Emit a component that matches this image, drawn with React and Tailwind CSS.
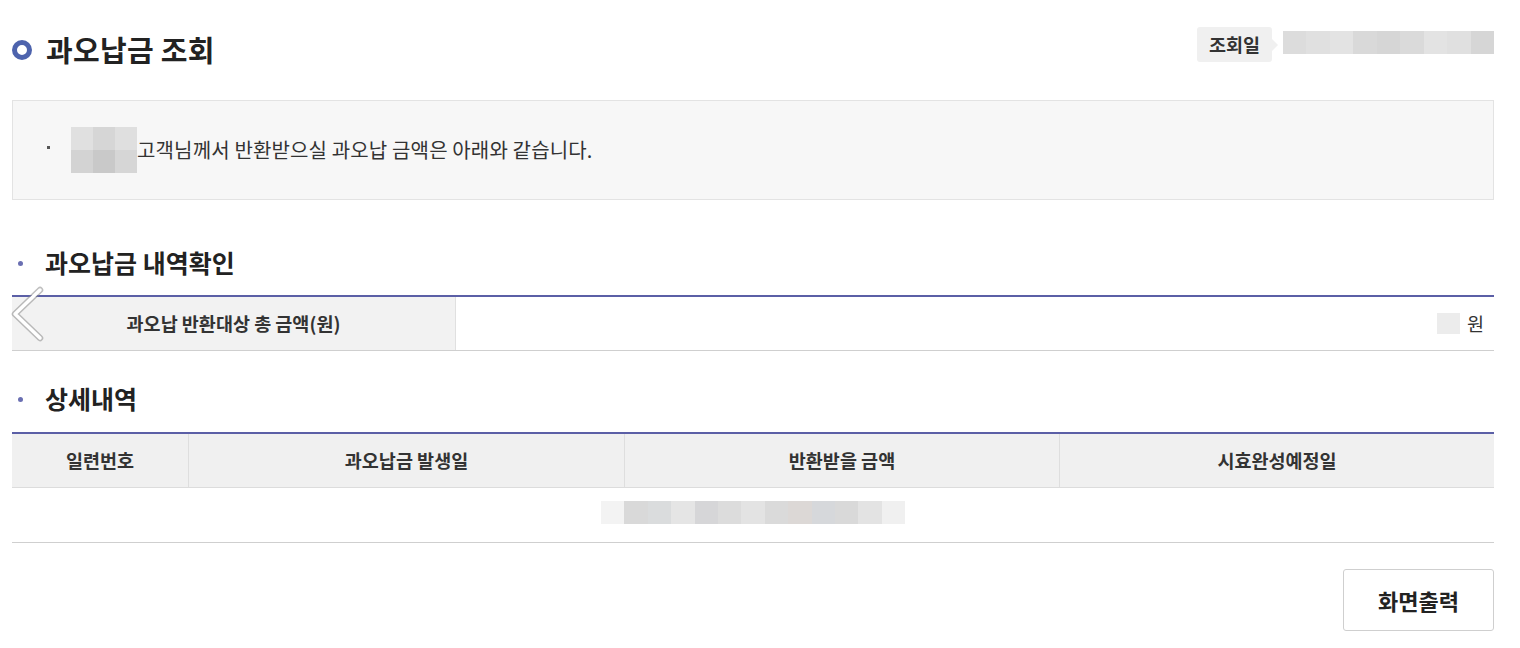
import React from 'react';

const font = { fontFamily: '"Noto Sans CJK KR", "Noto Sans", sans-serif' };

// pixelated placeholders (masked values in the screenshot)
const dateCells = ['bg-[#dcdcdc]', 'bg-[#e0e0e0]', 'bg-[#e3e3e3]', 'bg-[#d9d9d9]', 'bg-[#d6d6d6]', 'bg-[#dadada]', 'bg-[#e3e3e3]', 'bg-[#e0e0e0]', 'bg-[#d6d6d6]'];
const nameCells = ['bg-[#e0e0e0]', 'bg-[#d6d6d6]', 'bg-[#dfdfdf]', 'bg-[#d3d3d3]', 'bg-[#c9c9c9]', 'bg-[#d6d6d6]'];
const rowCells = ['bg-[#f3f3f3]', 'bg-[#d9d9d9]', 'bg-[#dadcdd]', 'bg-[#e5e5e5]', 'bg-[#d6d6d8]', 'bg-[#dcdcdc]', 'bg-[#e3e3e3]', 'bg-[#dadada]', 'bg-[#dcd8d6]', 'bg-[#d6d8db]', 'bg-[#d9d9d9]', 'bg-[#e3e3e3]', 'bg-[#f0f0f0]'];

function SectionTitle({ children, className }) {
    return (
        <div className={`flex items-center h-[34px] ${className}`}>
            <span className="w-[5px] h-[5px] rounded-full bg-[#6a6fb2] ml-[6px] mr-[22px] mt-[2px]"></span>
            <h3 className="text-[25px] font-bold text-[#222] leading-[34px]">{children}</h3>
        </div>
    );
}

export default function App() {
    return (
        <div className="w-[1520px] h-[648px] bg-white overflow-hidden relative" style={font}>
            <div className="ml-[12px] w-[1482px]">

                {/* Header */}
                <div className="h-[100px] flex justify-between items-start">
                    <div className="flex items-center mt-[32px]">
                        <span className="w-[20px] h-[20px] rounded-full border-[5px] border-[#4d63ad] box-border mt-[1px]"></span>
                        <h2 className="ml-[14px] text-[29px] font-bold text-[#222] leading-[34px] tracking-[0.3px]">과오납금 조회</h2>
                    </div>
                    <div className="flex items-start mt-[27px]">
                        <div className="relative h-[35px] px-[12px] flex items-center bg-[#f0f0f0] rounded-[3px] text-[18.5px] font-bold text-[#333]">
                            조회일
                            <span className="absolute right-[-6px] top-[12px] w-0 h-0 border-y-[6px] border-y-transparent border-l-[6px] border-l-[#f0f0f0]"></span>
                        </div>
                        <div className="ml-[11px] mt-[4px] flex h-[23px] w-[211px]">
                            {dateCells.map((c, i) => <span key={i} className={`flex-1 ${c}`}></span>)}
                        </div>
                    </div>
                </div>

                {/* Notice box */}
                <div className="h-[100px] bg-[#f7f7f7] border border-[#e3e3e3] flex items-center">
                    <span className="w-[3px] h-[3px] bg-[#555] ml-[34px] mr-[21px] mt-[-6px]"></span>
                    <div className="grid grid-cols-3 grid-rows-2 w-[66px] h-[46px]">
                        {nameCells.map((c, i) => <span key={i} className={c}></span>)}
                    </div>
                    <p className="text-[20px] text-[#333] leading-[26px] tracking-[0.15px]">고객님께서 반환받으실 과오납 금액은 아래와 같습니다.</p>
                </div>

                {/* Summary */}
                <SectionTitle className="mt-[45px] mb-[16px]">과오납금 내역확인</SectionTitle>
                <div className="border-t-2 border-[#5b5fa6] border-b border-b-[#cfcfcf] flex h-[56px]">
                    <div className="w-[444px] bg-[#f2f2f2] border-r border-[#e0e0e0] flex items-center justify-center text-[18.5px] font-bold text-[#333]">
                        과오납 반환대상 총 금액(원)
                    </div>
                    <div className="flex-1 flex items-center justify-end pr-[10px]">
                        <span className="w-[23px] h-[21px] bg-[#ececec] mr-[7px]"></span>
                        <span className="text-[18.5px] text-[#333]">원</span>
                    </div>
                </div>

                {/* Detail */}
                <SectionTitle className="mt-[30px] mb-[17px]">상세내역</SectionTitle>
                <div className="border-t-2 border-[#5b5fa6]">
                    <div className="grid grid-cols-[177px_436px_435px_1fr] h-[54px] bg-[#f0f0f0] border-b border-[#dcdcdc] text-[18.5px] font-bold text-[#333]">
                        <div className="flex items-center justify-center border-r border-[#dedede]">일련번호</div>
                        <div className="flex items-center justify-center border-r border-[#dedede]">과오납금 발생일</div>
                        <div className="flex items-center justify-center border-r border-[#dedede]">반환받을 금액</div>
                        <div className="flex items-center justify-center">시효완성예정일</div>
                    </div>
                    <div className="h-[55px] border-b border-[#cfcfcf] flex items-center justify-center">
                        <div className="flex h-[23px] w-[304px] mt-[-6px]">
                            {rowCells.map((c, i) => <span key={i} className={`flex-1 ${c}`}></span>)}
                        </div>
                    </div>
                </div>

                <div className="flex justify-end mt-[26px]">
                    <button className="w-[151px] h-[62px] border border-[#cfcfcf] rounded-[3px] bg-white text-[22px] font-bold text-[#222]">
                        화면출력
                    </button>
                </div>
            </div>

            {/* carousel arrow overlay */}
            <svg className="absolute left-[6px] top-[286px]" width="40" height="56" viewBox="0 0 40 56" fill="none">
                <path d="M34 4 L9 28 L34 52" stroke="#8a8a8a" strokeWidth="6.5" strokeLinecap="round" strokeLinejoin="round" opacity="0.55" />
                <path d="M34 4 L9 28 L34 52" stroke="#ffffff" strokeWidth="3.5" strokeLinecap="round" strokeLinejoin="round" />
            </svg>
        </div>
    );
}
